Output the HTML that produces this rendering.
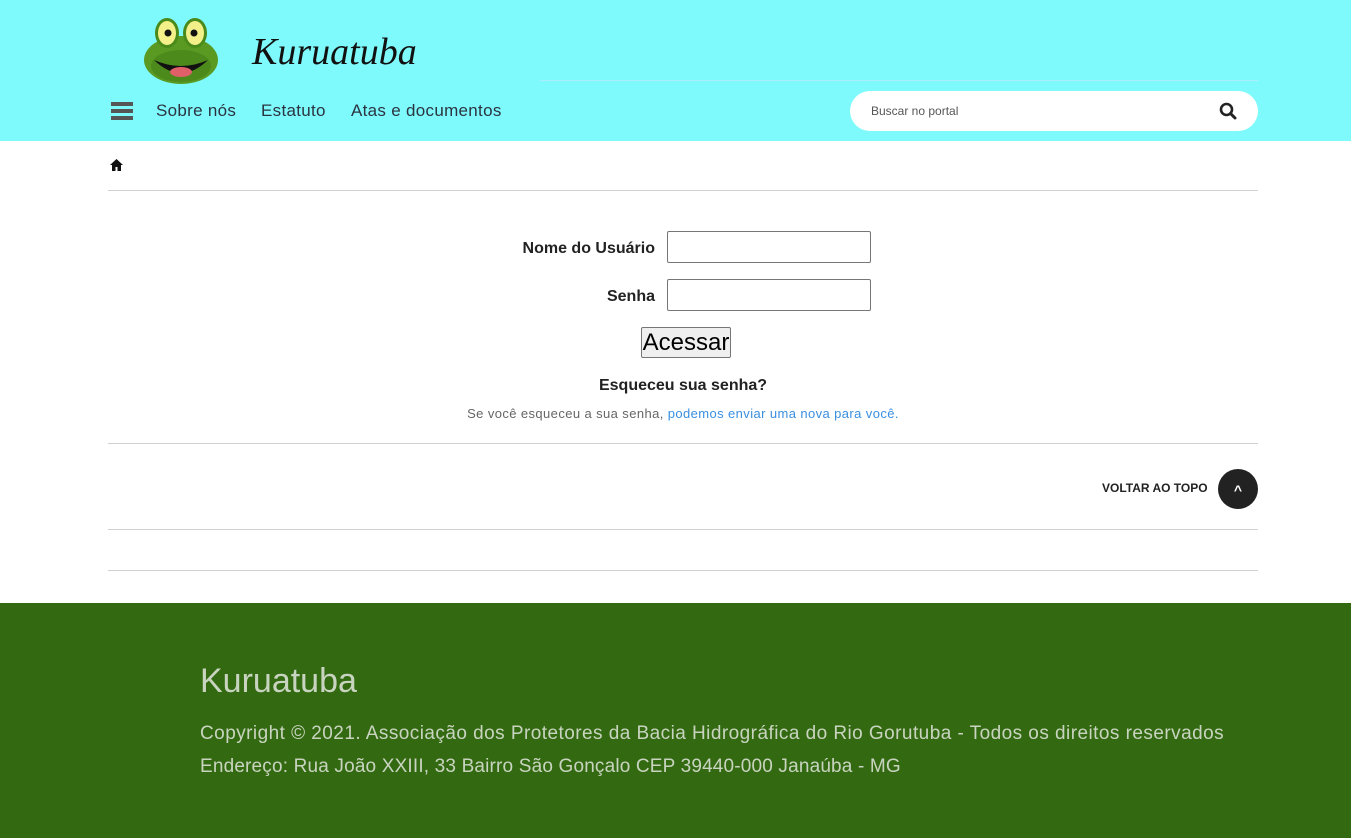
<!DOCTYPE html>
<html><head><meta charset="utf-8"><style>
*{box-sizing:border-box;margin:0;padding:0}
body{width:1351px;height:838px;overflow:hidden;font-family:"Liberation Sans",sans-serif;background:#fff;position:relative}
.hdr{position:absolute;left:0;top:0;width:1351px;height:141px;background:#7ffafc}
.abs{position:absolute}
.nav a{position:absolute;top:101px;font-size:17px;color:#2a3440;text-decoration:none;letter-spacing:.3px}
.hr{position:absolute;left:108px;width:1150px;height:1px;background:#d0d0d0}
.lbl{position:absolute;font-weight:bold;font-size:16px;color:#222;text-align:right}
.inp{position:absolute;width:204px;height:32px;border:1px solid #767676;border-radius:2px;background:#fff}
.foot{position:absolute;left:0;top:603px;width:1351px;height:235px;background:#336a11;color:#c9d4c0}
</style></head><body>
<div class="hdr">
  <svg class="abs" style="left:140px;top:14px" width="82" height="72" viewBox="0 0 82 72">
    <ellipse cx="41" cy="46" rx="37" ry="24" fill="#5a9a22"/>
    <ellipse cx="41" cy="52" rx="30" ry="16" fill="#3e7a14" opacity=".5"/>
    <ellipse cx="27" cy="19" rx="12" ry="15" fill="#4a8a1a"/>
    <ellipse cx="55" cy="19" rx="12" ry="15" fill="#4a8a1a"/>
    <ellipse cx="27" cy="19" rx="9" ry="12" fill="#f3f08a"/>
    <ellipse cx="55" cy="19" rx="9" ry="12" fill="#f3f08a"/>
    <circle cx="28" cy="19" r="3.5" fill="#111"/><circle cx="54" cy="19" r="3.5" fill="#111"/>
    <path d="M14 46 Q41 72 68 46 Q41 58 14 46Z" fill="#111"/>
    <ellipse cx="41" cy="58" rx="11" ry="5" fill="#e0606a"/>
  </svg>
  <div class="abs" style="left:252px;top:30px;font-family:'Liberation Serif',serif;font-style:italic;font-size:38px;color:#111">Kuruatuba</div>
  <div class="abs" style="left:540px;top:80px;width:718px;height:1px;background:#aef"></div>
  <div class="abs" style="left:111px;top:102px;width:22px;height:4px;background:#555"></div>
  <div class="abs" style="left:111px;top:109px;width:22px;height:4px;background:#555"></div>
  <div class="abs" style="left:111px;top:116px;width:22px;height:4px;background:#555"></div>
  <div class="nav"><a style="left:156px">Sobre nós</a><a style="left:261px">Estatuto</a><a style="left:351px">Atas e documentos</a></div>
  <div class="abs" style="left:850px;top:91px;width:408px;height:40px;background:#fff;border-radius:20px"></div>
  <div class="abs" style="left:871px;top:104px;font-size:12px;color:#555">Buscar no portal</div>
  <svg class="abs" style="left:1219px;top:102px" width="18" height="18" viewBox="0 0 18 18"><circle cx="7.5" cy="7.5" r="5.5" fill="none" stroke="#222" stroke-width="2.6"/><path d="M11.5 11.5L16 16" stroke="#222" stroke-width="3" stroke-linecap="round"/></svg>
</div>
<svg class="abs" style="left:110px;top:159px" width="13" height="12" viewBox="0 0 13 12"><path d="M6.5 0L0 6h2v6h3.5V8h2v4H11V6h2z" fill="#111"/></svg>
<div class="hr" style="top:190px"></div>
<div class="lbl" style="left:480px;width:175px;top:240px">Nome do Usuário</div>
<div class="inp" style="left:667px;top:231px"></div>
<div class="lbl" style="left:480px;width:175px;top:288px">Senha</div>
<div class="inp" style="left:667px;top:279px"></div>
<div class="abs" style="left:641px;top:327px;width:90px;height:31px;border:1px solid #767676;border-radius:2px;background:#efefef;font-size:24px;text-align:center;line-height:29px;color:#000">Acessar</div>
<div class="abs" style="left:0;width:1366px;text-align:center;top:377px;font-weight:bold;font-size:16px;color:#222">Esqueceu sua senha?</div>
<div class="abs" style="left:0;width:1366px;text-align:center;top:406px;font-size:13px;color:#666;letter-spacing:.4px">Se você esqueceu a sua senha, <span style="color:#3a8fe0">podemos enviar uma nova para você.</span></div>
<div class="hr" style="top:443px"></div>
<div class="abs" style="left:1102px;top:481px;font-size:12px;font-weight:bold;color:#222">VOLTAR AO TOPO</div>
<div class="abs" style="left:1218px;top:469px;width:40px;height:40px;border-radius:50%;background:#222;color:#fff;text-align:center;font-weight:bold;font-size:14px;line-height:42px">^</div>
<div class="hr" style="top:529px"></div>
<div class="hr" style="top:570px"></div>
<div class="foot">
  <div class="abs" style="left:200px;top:59px;font-size:34px">Kuruatuba</div>
  <div class="abs" style="left:200px;top:120px;font-size:19px;letter-spacing:.45px;white-space:nowrap">Copyright © 2021. Associação dos Protetores da Bacia Hidrográfica do Rio Gorutuba - Todos os direitos reservados</div>
  <div class="abs" style="left:200px;top:153px;font-size:19px;letter-spacing:.17px;white-space:nowrap">Endereço: Rua João XXIII, 33 Bairro São Gonçalo CEP 39440-000 Janaúba - MG</div>
</div>
</body></html>
